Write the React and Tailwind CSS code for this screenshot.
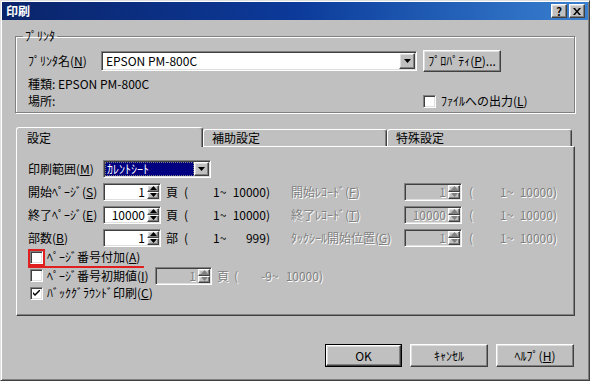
const raised =
  "border border-t-white border-l-white border-r-[#404040] border-b-[#404040] shadow-[inset_-1px_-1px_0_#808080,inset_1px_1px_0_#dfdfdf]";
const sunken =
  "border border-t-[#808080] border-l-[#808080] border-r-white border-b-white shadow-[inset_1px_1px_0_#404040,inset_-1px_-1px_0_#dfdfdf]";
const gray = "text-[#808080] [text-shadow:1px_1px_0_#fff]";

function Arrow({ dir = "down", color = "#000" }) {
  return (
    <svg width="7" height="4" viewBox="0 0 7 4" className="block">
      {dir === "down" ? (
        <path d="M0 0h7L3.5 4z" fill={color} />
      ) : (
        <path d="M0 4h7L3.5 0z" fill={color} />
      )}
    </svg>
  );
}

function Spin({ value, w, disabled }) {
  return (
    <div className={`flex h-[18px] ${w} ${sunken} ${disabled ? "bg-[#c0c0c0]" : "bg-white"} p-px`}>
      <div className={`flex-1 pr-[2px] text-right leading-[14px] ${disabled ? gray : ""}`}>{value}</div>
      <div className="flex w-[12px] flex-col">
        <div className={`flex h-[7px] items-center justify-center bg-[#c0c0c0] ${raised}`}>
          <Arrow dir="up" color={disabled ? "#808080" : "#000"} />
        </div>
        <div className={`flex h-[7px] items-center justify-center bg-[#c0c0c0] ${raised}`}>
          <Arrow color={disabled ? "#808080" : "#000"} />
        </div>
      </div>
    </div>
  );
}

function Box({ checked }) {
  return (
    <div className={`flex h-[13px] w-[13px] shrink-0 items-center justify-center bg-white ${sunken}`}>
      {checked && (
        <svg width="7" height="7" viewBox="0 0 7 7">
          <path d="M0 2v2l2 2 5-5V-1L2 4z" fill="#000" />
        </svg>
      )}
    </div>
  );
}

function Range({ lo, hi, disabled, unit, w1 = "w-[18px]", w2 = "w-[29px]", total = "w-[104px]" }) {
  return (
    <div className={`flex ${total} ${disabled ? gray : ""}`}>
      {unit && <span className={w1}>{unit}</span>}
      <span className={w2}>(</span>
      <span>{lo}</span>
      <span className="flex-1 text-right">{hi}</span>
    </div>
  );
}

function Btn({ children, w, def }) {
  return (
    <div
      className={`flex h-[23px] ${w} items-center justify-center bg-[#c0c0c0] ${
        def ? "border border-black" : ""
      }`}
    >
      <div className={`flex h-full w-full items-center justify-center ${raised}`}>{children}</div>
    </div>
  );
}

export default function App() {
  return (
    <div
      className="flex h-[381px] w-[590px] flex-col overflow-hidden border border-t-[#dfdfdf] border-l-[#dfdfdf] border-r-[#404040] border-b-[#404040] bg-[#c0c0c0] p-px text-[12px] leading-[14px] text-black shadow-[inset_1px_1px_0_#fff,inset_-1px_-1px_0_#808080]"
      style={{ fontFamily: '"Noto Sans CJK JP", "DejaVu Sans", sans-serif' }}
    >
      {/* title bar */}
      <div className="flex h-[18px] items-center bg-gradient-to-r from-[#0a246a] via-[#0c3a9a] to-[#3a80d0] pl-[4px] pr-[3px]">
        <span className="flex-1 font-bold text-white">印刷</span>
        <div className={`flex h-[14px] w-[16px] items-center justify-center bg-[#c0c0c0] ${raised}`}>
          <span className="text-[11px] font-bold leading-none">?</span>
        </div>
        <div className={`ml-[2px] flex h-[14px] w-[16px] items-center justify-center bg-[#c0c0c0] ${raised}`}>
          <svg width="8" height="7" viewBox="0 0 8 7">
            <path d="M0 0h2l2 2.5L6 0h2L5 3.5 8 7H6L4 4.5 2 7H0l3-3.5z" fill="#000" />
          </svg>
        </div>
      </div>

      <div className="flex flex-1 flex-col px-[13px]">
        {/* printer group */}
        <fieldset className="mt-[9px] border border-[#808080] pl-[12px] pr-[8px] pb-[3px] shadow-[inset_1px_1px_0_#fff,1px_1px_0_#fff]">
          <legend className="-ml-[5px] px-[2px]">ﾌﾟﾘﾝﾀ</legend>
          <div className="mt-[7px] flex h-[22px] items-center">
            <span className="w-[73px]">
              ﾌﾟﾘﾝﾀ名(<u>N</u>)
            </span>
            <div className={`flex h-[20px] w-[316px] items-center bg-white p-px ${sunken}`}>
              <span className="flex-1 pl-[3px]">EPSON PM-800C</span>
              <div className={`flex h-full w-[16px] items-center justify-center bg-[#c0c0c0] ${raised}`}>
                <Arrow />
              </div>
            </div>
            <div className={`ml-[6px] flex h-[22px] w-[78px] items-center justify-center bg-[#c0c0c0] ${raised}`}>
              ﾌﾟﾛﾊﾟﾃｨ(<u>P</u>)...
            </div>
          </div>
          <div className="mt-[4px] flex h-[16px] items-center">種類: EPSON PM-800C</div>
          <div className="mt-px flex h-[16px] items-center">
            <span className="w-[395px]">場所:</span>
            <div className="flex items-center gap-[5px]">
              <Box />
              <span>
                ﾌｧｲﾙへの出力(<u>L</u>)
              </span>
            </div>
          </div>
        </fieldset>

        {/* tabs */}
        <div className="mt-[14px] ml-px flex h-[19px] items-end">
          <div className="relative z-10 -mb-px flex h-[20px] w-[187px] items-center rounded-t-[3px] border border-b-0 border-t-white border-l-white border-r-[#404040] bg-[#c0c0c0] pl-[10px] shadow-[inset_-1px_0_0_#808080]">
            設定
          </div>
          <div className="flex h-[17px] w-[184px] items-center rounded-t-[3px] border border-b-0 border-t-white border-l-white border-r-[#404040] pl-[8px] shadow-[inset_-1px_0_0_#808080]">
            補助設定
          </div>
          <div className="flex h-[17px] w-[185px] items-center rounded-t-[3px] border border-b-0 border-t-white border-l-white border-r-[#404040] pl-[8px] shadow-[inset_-1px_0_0_#808080]">
            特殊設定
          </div>
        </div>
        <div className="ml-px flex h-[170px] w-[559px] flex-col border border-t-white border-l-white border-r-[#404040] border-b-[#404040] pl-[11px] pt-[10px] shadow-[inset_-1px_-1px_0_#808080]">
          <div className="flex h-[23px] items-center">
            <span className="w-[75px]">
              印刷範囲(<u>M</u>)
            </span>
            <div className={`flex h-[18px] w-[108px] items-center bg-white p-px ${sunken}`}>
              <span className="flex h-full flex-1 items-center bg-[#000080] pl-[2px] text-white outline-1 outline-dotted outline-offset-[-1px] outline-[#808080]">
                ｶﾚﾝﾄｼｰﾄ
              </span>
              <div className={`flex h-full w-[15px] items-center justify-center bg-[#c0c0c0] ${raised}`}>
                <Arrow />
              </div>
            </div>
          </div>

          <div className="flex h-[23px] items-center">
            <span className="w-[75px]">
              開始ﾍﾟｰｼﾞ(<u>S</u>)
            </span>
            <Spin value="1" w="w-[58px]" />
            <div className="ml-[5px]">
              <Range unit="頁" lo="1~" hi="10000)" />
            </div>
            <span className={`ml-[21px] w-[113px] ${gray}`}>
              開始ﾚｺｰﾄﾞ(<u>F</u>)
            </span>
            <Spin value="1" w="w-[58px]" disabled />
            <div className="ml-[7px]">
              <Range lo="1~" hi="10000)" disabled w2="w-[31px]" total="w-[88px]" />
            </div>
          </div>

          <div className="flex h-[23px] items-center">
            <span className="w-[75px]">
              終了ﾍﾟｰｼﾞ(<u>E</u>)
            </span>
            <Spin value="10000" w="w-[58px]" />
            <div className="ml-[5px]">
              <Range unit="頁" lo="1~" hi="10000)" />
            </div>
            <span className={`ml-[21px] w-[113px] ${gray}`}>
              終了ﾚｺｰﾄﾞ(<u>T</u>)
            </span>
            <Spin value="10000" w="w-[58px]" disabled />
            <div className="ml-[7px]">
              <Range lo="1~" hi="10000)" disabled w2="w-[31px]" total="w-[88px]" />
            </div>
          </div>

          <div className="flex h-[23px] items-center">
            <span className="w-[75px]">
              部数(<u>B</u>)
            </span>
            <Spin value="1" w="w-[58px]" />
            <div className="ml-[5px]">
              <Range unit="部" lo="1~" hi="999)" />
            </div>
            <span className={`ml-[21px] w-[113px] whitespace-nowrap ${gray}`}>
              ﾀｯｸｼｰﾙ開始位置(<u>G</u>)
            </span>
            <Spin value="1" w="w-[58px]" disabled />
            <div className="ml-[7px]">
              <Range lo="1~" hi="10000)" disabled w2="w-[31px]" total="w-[88px]" />
            </div>
          </div>

          <div className="flex h-[18px] items-center">
            <div className="flex items-center border-b-2 border-[#e02020] pr-[4px]">
              <div className="flex h-[17px] w-[17px] items-center justify-center border-2 border-[#e02020]">
                <Box />
              </div>
              <span className="ml-[2px]">
                ﾍﾟｰｼﾞ番号付加(<u>A</u>)
              </span>
            </div>
          </div>
          <div className="flex h-[17px] items-center pl-[2px]">
            <Box />
            <span className="ml-[4px] w-[108px]">
              ﾍﾟｰｼﾞ番号初期値(<u>I</u>)
            </span>
            <Spin value="1" w="w-[57px]" disabled />
            <div className="ml-[5px]">
              <Range unit="頁" lo="-9~" hi="10000)" disabled w1="w-[17px]" w2="w-[27px]" total="w-[106px]" />
            </div>
          </div>
          <div className="flex h-[18px] items-center pl-[2px]">
            <Box checked />
            <span className="ml-[4px]">
              ﾊﾞｯｸｸﾞﾗｳﾝﾄﾞ印刷(<u>C</u>)
            </span>
          </div>
        </div>

        {/* buttons */}
        <div className="mt-[28px] flex justify-end gap-[8px] pr-[1px]">
          <Btn w="w-[77px]" def>
            OK
          </Btn>
          <Btn w="w-[78px]">ｷｬﾝｾﾙ</Btn>
          <Btn w="w-[78px]">
            ﾍﾙﾌﾟ(<u>H</u>)
          </Btn>
        </div>
      </div>
    </div>
  );
}
